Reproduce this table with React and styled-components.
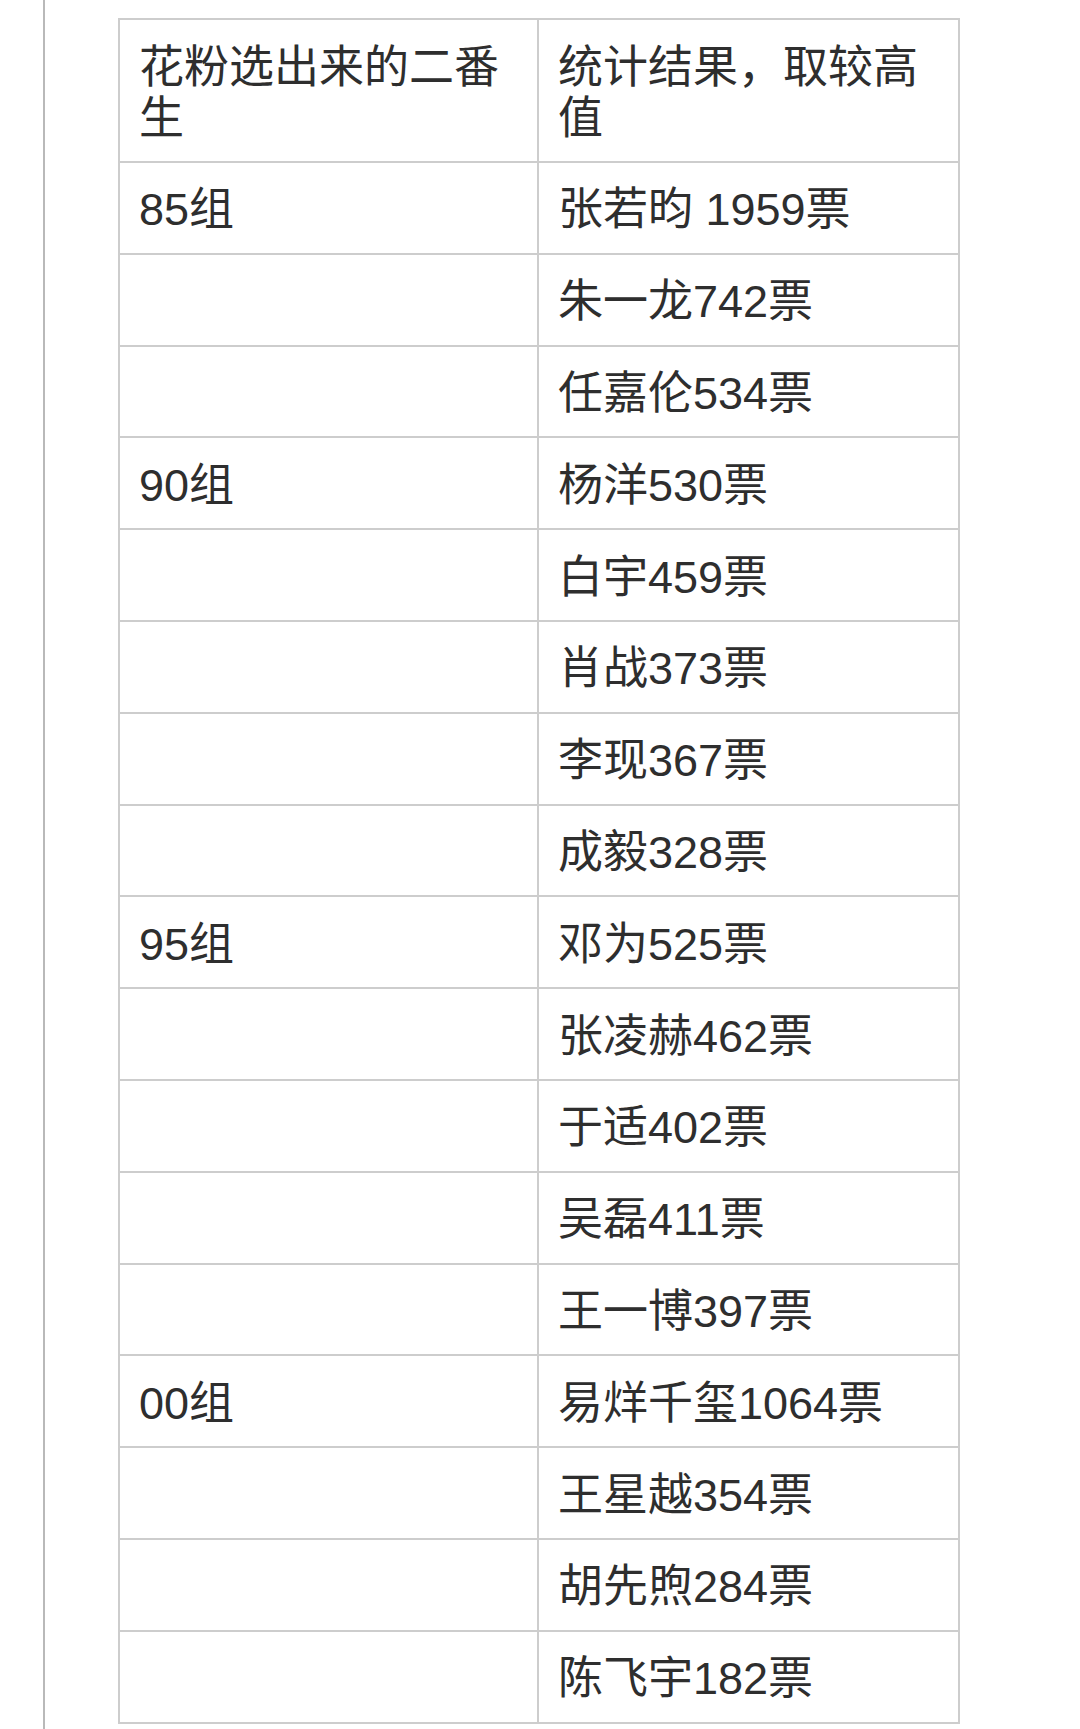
import React from "react";
import styled, { createGlobalStyle } from "styled-components";

const Global = createGlobalStyle`
  html, body { margin: 0; padding: 0; background: #ffffff; }
  body { font-family: "Liberation Sans", "Noto Sans CJK SC", sans-serif; }
`;

const Page = styled.div`
  min-height: 1729px;
  box-sizing: border-box;
  margin-left: 43px;
  border-left: 2px solid #b9b9b9;
  padding: 18px 0 0 73px;
  background: #ffffff;
`;

const Table = styled.table`
  width: 840px;
  border-collapse: collapse;
  table-layout: fixed;
  border: 2px solid #cdcdcd;
  color: #2e2e2e;
  font-family: "Liberation Sans", "Noto Sans CJK SC", sans-serif;
  font-size: 45px;
  line-height: 51px;
`;

const Col = styled.col`
  width: ${(p) => p.$w}px;
`;

const Row = styled.tr`
  height: ${(p) => (p.$head ? "143px" : "91.8px")};
`;

const Cell = styled.td`
  border: 2px solid #cdcdcd;
  padding: 4px 16px 0 ${(p) => (p.$right ? "19px" : "19px")};
  vertical-align: middle;
  word-break: break-all;
`;

const rows = [
  ["85组", "张若昀 1959票"],
  ["", "朱一龙742票"],
  ["", "任嘉伦534票"],
  ["90组", "杨洋530票"],
  ["", "白宇459票"],
  ["", "肖战373票"],
  ["", "李现367票"],
  ["", "成毅328票"],
  ["95组", "邓为525票"],
  ["", "张凌赫462票"],
  ["", "于适402票"],
  ["", "吴磊411票"],
  ["", "王一博397票"],
  ["00组", "易烊千玺1064票"],
  ["", "王星越354票"],
  ["", "胡先煦284票"],
  ["", "陈飞宇182票"],
];

export default function App() {
  return (
    <>
      <Global />
      <Page>
        <Table>
          <colgroup>
            <Col $w={419} />
            <Col $w={421} />
          </colgroup>
          <tbody>
            <Row $head>
              <Cell>花粉选出来的二番生</Cell>
              <Cell $right>统计结果，取较高值</Cell>
            </Row>
            {rows.map(([group, result], i) => (
              <Row key={i}>
                <Cell>{group}</Cell>
                <Cell $right>{result}</Cell>
              </Row>
            ))}
          </tbody>
        </Table>
      </Page>
    </>
  );
}
